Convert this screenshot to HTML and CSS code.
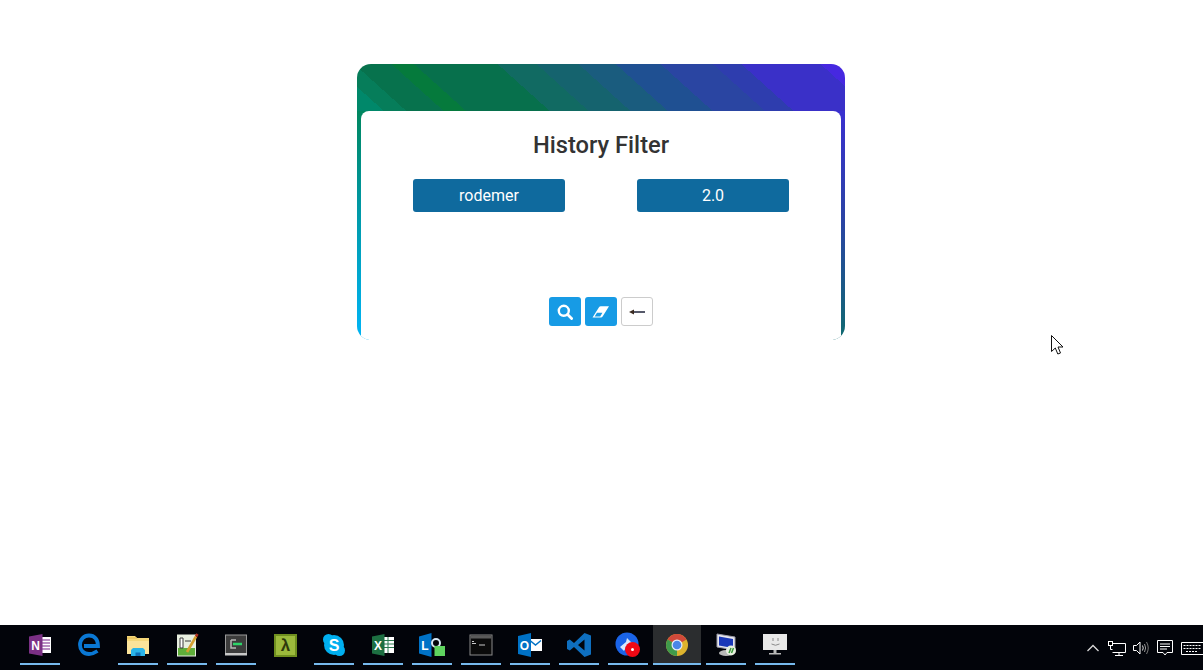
FILE: index.html
```html
<!DOCTYPE html>
<html lang="en">
<head>
    <meta charset="UTF-8">
    <meta name="viewport" content="width=device-width, initial-scale=1.0">
    <title>History Filter</title>
    <link rel="stylesheet" href="styles.css">
</head>
<body>
    <div class="page">
        <div class="card">
            <div class="cardBody">
                <h1 class="title">History Filter</h1>
                <div class="fields">
                    <div class="field">rodemer</div>
                    <div class="field">2.0</div>
                </div>
                <div class="actions">
                    <div class="btn btnBlue">
                        <svg width="16" height="16" viewBox="0 0 16 16"><circle cx="6.800" cy="6.800" r="5" fill="none" stroke="#fff" stroke-width="2.400"/><path d="M10.600 10.600 14.600 14.600" stroke="#fff" stroke-width="2.800" stroke-linecap="round"/></svg>
                    </div>
                    <div class="btn btnBlue">
                        <svg width="18" height="14" viewBox="0 0 18 14"><path d="M.5 12.500 7 2.200Q7.600 1.200 8.800 1.200H17L10.600 11.600Q10 12.500 9 12.500Z" fill="#fff"/><path d="M2.600 11.400 5 7.800H10.400L8.200 11.400Z" fill="#179be5"/></svg>
                    </div>
                    <div class="btn btnPlain">
                        <svg width="18" height="10" viewBox="0 0 18 10"><path d="M5 5H17" stroke="#2b2f45" stroke-width="1.600"/><path d="M1 5 6 2.400V7.600Z" fill="#3a2a20"/></svg>
                    </div>
                </div>
            </div>
        </div>
    </div>

    <div class="taskbar">
        <div class="task"><div class="taskIn">
            <svg width="24" height="24" viewBox="0 0 24 24"><rect x="12" y="4" width="11" height="16" fill="#fff"/><path d="M14 7h8M14 10h8M14 13h8M14 16h8" stroke="#a46bb0" stroke-width="1.400"/><path d="M1 3.500 14.500 1V23L1 20.500Z" fill="#7b3085"/><text x="7.500" y="16.500" class="iconText" font-size="12" fill="#fff">N</text></svg>
        </div></div>
        <div class="task"><div class="taskIn noLine">
            <svg width="24" height="24" viewBox="0 0 24 24"><path d="M20.500 18C17.500 20 14.500 21 12 21 6.500 21 3 17 3 12 3 6.500 7 2.500 12 2.500 17.500 2.500 21 6.500 21 13H7" fill="none" stroke="#0a78d4" stroke-width="3.800"/></svg>
        </div></div>
        <div class="task"><div class="taskIn">
            <svg width="24" height="24" viewBox="0 0 24 24"><path d="M1 3H9L11 5H23V21H1Z" fill="#f5d77a"/><rect x="1" y="8" width="22" height="13" fill="#fbe39a"/><path d="M1 5H11" stroke="#e0b64e"/><path d="M7 15H17L19 17V23H5V17Z" fill="#2ab4e8"/><path d="M9.500 19.500H14.500V23H9.500Z" fill="#0f6fb5"/></svg>
        </div></div>
        <div class="task"><div class="taskIn">
            <svg width="24" height="24" viewBox="0 0 24 24"><rect x="2" y="1.500" width="19" height="22" fill="#e8efe0"/><rect x="3" y="15" width="17" height="7.500" fill="#5fae3a"/><path d="M5 5H8V15H5ZM10 8H16" stroke="#3a3a3a" fill="#fff"/><path d="M12 19 21 3.500" stroke="#d4a030" stroke-width="2.600"/><path d="M21 3.500 22.500 1" stroke="#b03020" stroke-width="2.600"/></svg>
        </div></div>
        <div class="task"><div class="taskIn">
            <svg width="24" height="24" viewBox="0 0 24 24"><rect x="1.500" y="2" width="21" height="19" fill="#3c3c3c" stroke="#9a9a9a"/><rect x="1" y="20" width="22" height="2.500" fill="#c8c8c8"/><path d="M7 7H12M7 7V15H12" fill="none" stroke="#b8b8b8" stroke-width="1.500"/><path d="M9 11H18" stroke="#2dd46a" stroke-width="2.500"/></svg>
        </div></div>
        <div class="task"><div class="taskIn noLine">
            <svg width="24" height="24" viewBox="0 0 24 24"><rect x="1" y="1" width="23" height="23" fill="#6f8f1f"/><rect x="3" y="3" width="19" height="19" fill="#9cba3c"/><text x="12.500" y="18" class="iconText" font-size="17" fill="#2e3a0c">λ</text></svg>
        </div></div>
        <div class="task"><div class="taskIn">
            <svg width="24" height="24" viewBox="0 0 24 24"><circle cx="12" cy="12" r="10" fill="#00aff0"/><circle cx="6.500" cy="6.500" r="5.500" fill="#00aff0"/><circle cx="17.500" cy="17.500" r="5.500" fill="#00aff0"/><text x="12" y="17.500" class="iconText" font-size="16" fill="#fff">S</text></svg>
        </div></div>
        <div class="task"><div class="taskIn">
            <svg width="24" height="24" viewBox="0 0 24 24"><rect x="11" y="4" width="12" height="16" fill="#fff"/><path d="M13 7.500H23M13 11H23M13 14.500H23M17 4V20" stroke="#2a7a4e"/><path d="M1 3.500 13.500 1V23L1 20.500Z" fill="#1d6f42"/><text x="7" y="16.500" class="iconText" font-size="12" fill="#fff">X</text></svg>
        </div></div>
        <div class="task"><div class="taskIn">
            <svg width="26" height="24" viewBox="0 0 26 24"><path d="M0 3.500 12.500 0V24L0 20.500Z" fill="#0072c6"/><text x="6" y="16.500" class="iconText" font-size="12" fill="#fff">L</text><circle cx="17" cy="10" r="4" fill="none" stroke="#d8e8f4" stroke-width="2"/><rect x="15.500" y="13" width="10.500" height="10" fill="#5fd45f"/></svg>
        </div></div>
        <div class="task"><div class="taskIn">
            <svg width="24" height="24" viewBox="0 0 24 24"><rect x="1" y="2" width="22" height="20" fill="#0a0a0a" stroke="#8a8a8a"/><rect x="1.500" y="2.500" width="21" height="3" fill="#5a5a5a"/><path d="M3 8.500H5M3 10.500H7M10 12H16" stroke="#c8c8c8"/></svg>
        </div></div>
        <div class="task"><div class="taskIn">
            <svg width="24" height="24" viewBox="0 0 24 24"><rect x="11" y="6" width="13" height="12" fill="#fff"/><path d="M12 7.500 17.500 12 23 7.500" fill="none" stroke="#0072c6" stroke-width="1.500"/><path d="M0 3 13 0V24L0 21Z" fill="#0072c6"/><text x="6.500" y="16.500" class="iconText" font-size="12" fill="#fff">O</text></svg>
        </div></div>
        <div class="task"><div class="taskIn">
            <svg width="24" height="24" viewBox="0 0 24 24"><path d="M17.500 0 24 2.500V21.500L17.500 24 7 14 2.800 17.500 0 16V8L2.800 6.500 7 10ZM17.500 6.500 11 12 17.500 17.500Z" fill="#0e6fc0" fill-rule="evenodd"/></svg>
        </div></div>
        <div class="task"><div class="taskIn">
            <svg width="26" height="26" viewBox="0 0 26 26"><circle cx="12" cy="12" r="11.500" fill="#1a64e8"/><path d="M5 15 11 10 12 6 17 11 13 12 9 19Z" fill="#d8e8fc"/><circle cx="17.500" cy="17.500" r="7.500" fill="#f00814"/><circle cx="17.500" cy="17.500" r="1.500" fill="#fff"/></svg>
        </div></div>
        <div class="task taskActive"><div class="taskIn">
            <svg width="24" height="24" viewBox="0 0 24 24"><circle cx="12" cy="12" r="11" fill="#ddb32e"/><path d="M12 12 2.500 6.500A11 11 0 0 1 21.500 6.500Z" fill="#d0493a"/><path d="M12 12 2.500 6.500A11 11 0 0 0 12 23Z" fill="#3f9a4b"/><circle cx="12" cy="12" r="5.500" fill="#e8eef8"/><circle cx="12" cy="12" r="4.300" fill="#4a86e8"/></svg>
        </div></div>
        <div class="task"><div class="taskIn">
            <svg width="24" height="24" viewBox="0 0 24 24"><path d="M3 1 21 4V17L3 14Z" fill="#e8e8ee" stroke="#9a9aa8"/><path d="M5 3.500 19 6V15L5 12.500Z" fill="#1a38b8"/><ellipse cx="12" cy="20" rx="7" ry="3" fill="#b8b8b8"/><circle cx="17" cy="17.500" r="5" fill="#e8f0e0"/><path d="M15 20 17 15M17.500 20 19.500 15" stroke="#3a9a3a" stroke-width="1.500"/></svg>
        </div></div>
        <div class="task"><div class="taskIn">
            <svg width="24" height="22" viewBox="0 0 24 22"><rect x="0" y="0" width="24" height="16" fill="#e8e8e8"/><path d="M10 4V7M15 4V7M8.500 10Q12.500 12.500 16.500 10" fill="none" stroke="#8a8a8a"/><rect x="10.500" y="16" width="3" height="3" fill="#b8b8b8"/><rect x="6" y="19" width="12" height="1.500" fill="#b8b8b8"/></svg>
        </div></div>

        <div class="tray">
            <svg class="trayNet" width="12" height="8" viewBox="0 0 12 8"><path d="M.5 7 6 1.500 11.500 7" fill="none" stroke="#d8d8d8" stroke-width="1.300"/></svg>
            <svg width="18" height="15" viewBox="0 0 18 15"><path d="M4.500 2.500H17.500V11.500H4.500M11 11.500V14.500M7 14.500H15" fill="none" stroke="#fff"/><rect x=".5" y=".5" width="4" height="4" fill="#000" stroke="#fff"/><path d="M2.500 4.500V8.500H4.500" fill="none" stroke="#fff"/></svg>
            <svg width="17" height="14" viewBox="0 0 17 14"><path d="M.5 4.500H3.500L7 1V13L3.500 9.500H.5Z" fill="none" stroke="#fff"/><path d="M9.500 4.500Q11 7 9.500 9.500" fill="none" stroke="#ddd"/><path d="M11.500 3Q13.800 7 11.500 11" fill="none" stroke="#999"/><path d="M13.500 1Q17 7 13.500 13" fill="none" stroke="#777"/></svg>
            <svg class="trayNote" width="16" height="16" viewBox="0 0 16 16"><path d="M.5.500H15.500V12.500H10L8 15 6 12.500H.5Z" fill="none" stroke="#fff"/><path d="M3 4H13M3 6.500H13M3 9H10" stroke="#fff"/></svg>
            <svg width="22" height="13" viewBox="0 0 22 13"><path d="M22 .5H.5V12.500H22" fill="none" stroke="#fff"/><path d="M2.500 3.500H20M2.500 6.500H20M5 9.500H17" stroke="#fff" stroke-dasharray="2 1"/></svg>
        </div>
    </div>

    <svg class="cursor" width="13" height="20" viewBox="0 0 13 20"><path d="M.5.500V16.500L4.300 13 6.800 19 9.500 18 7 12H12Z" fill="#fff" stroke="#111"/></svg>
</body>
</html>
```

FILE: styles.css
```css
*{
    padding: 0px;
    margin: 0px;
    box-sizing: border-box;
}
body{
    position: relative;
    height: 670px;
    overflow: hidden;
    display: flex;
    flex-direction: column;
    background: #fff;
    font-family: Roboto, "Liberation Sans", sans-serif;
}
.page{
    flex: 1;
    padding-top: 64px;
}
.card{
    width: 488px;
    margin-left: 357px;
    padding: 47px 4px 0px;
    border-radius: 14px;
    overflow: hidden;
    background-repeat: no-repeat;
    background-image:
        linear-gradient(42deg,
            #00886a 18px, #067d5a 18px, #067d5a 33px, #07724d 33px, #07724d 58px,
            #057a3c 58px, #057a3c 73px, #07704c 73px, #07704c 129px,
            #116a62 129px, #116a62 155px, #15636e 155px, #15636e 183px,
            #1a5c7e 183px, #1a5c7e 208px, #1f5092 208px, #1f5092 238px,
            #2a45a2 238px, #2a45a2 273px, #2e3dae 273px, #2e3dae 292px,
            #3a30c8 292px, #3a30c8 345px, #4628e0 345px),
        linear-gradient(180deg, #00875f 0px, #0097a0 90px, #00b2ef 215px),
        linear-gradient(180deg, #3a30d0 0px, #2a44a4 110px, #0f6a70 228px);
    background-size: 100% 47px, 12px 100%, 12px 100%;
    background-position: 0px 0px, 0px 47px, 476px 47px;
}
.cardBody{
    background: #fff;
    border-radius: 8px 8px 0px 0px;
    padding: 20px 0px 14px;
}
.title{
    font-size: 23.700px;
    line-height: 28px;
    font-weight: 500;
    color: #333;
    text-align: center;
}
.fields{
    display: flex;
    justify-content: center;
    gap: 72px;
    margin-top: 20px;
}
.field{
    width: 152px;
    height: 33px;
    line-height: 34px;
    border-radius: 3px;
    background: #0f6a9e;
    color: #fff;
    font-size: 16px;
    text-align: center;
}
.actions{
    display: flex;
    justify-content: center;
    gap: 4px;
    margin-top: 85px;
}
.btn{
    width: 32px;
    height: 29px;
    border-radius: 3px;
    display: flex;
    align-items: center;
    justify-content: center;
}
.btnBlue{
    background: #179be5;
}
.btnPlain{
    background: #fff;
    border: 1px solid #ccc;
}
.taskbar{
    height: 45px;
    display: flex;
    gap: 1px;
    padding-left: 16px;
    background: #02040a;
}
.task{
    width: 48px;
    padding: 0px 4px 5px;
}
.taskIn{
    height: 40px;
    padding-top: 2px;
    border-bottom: 2px solid #76b9ed;
    display: flex;
    align-items: center;
    justify-content: center;
}
.noLine{
    border-bottom-color: transparent;
}
.taskActive{
    padding: 0px 0px 5px;
}
.taskActive .taskIn{
    background: #2b2d2f;
}
.iconText{
    font-family: "Liberation Sans", sans-serif;
    font-weight: 700;
    text-anchor: middle;
}
.tray{
    margin-left: auto;
    display: flex;
    align-items: center;
    gap: 7px;
    padding-top: 1px;
}
.tray svg{
    flex: none;
}
.tray .trayNet{
    margin-right: 2px;
}
.tray .trayNote{
    margin-right: 1px;
}
.cursor{
    position: absolute;
    left: 1051px;
    top: 335px;
}
```
